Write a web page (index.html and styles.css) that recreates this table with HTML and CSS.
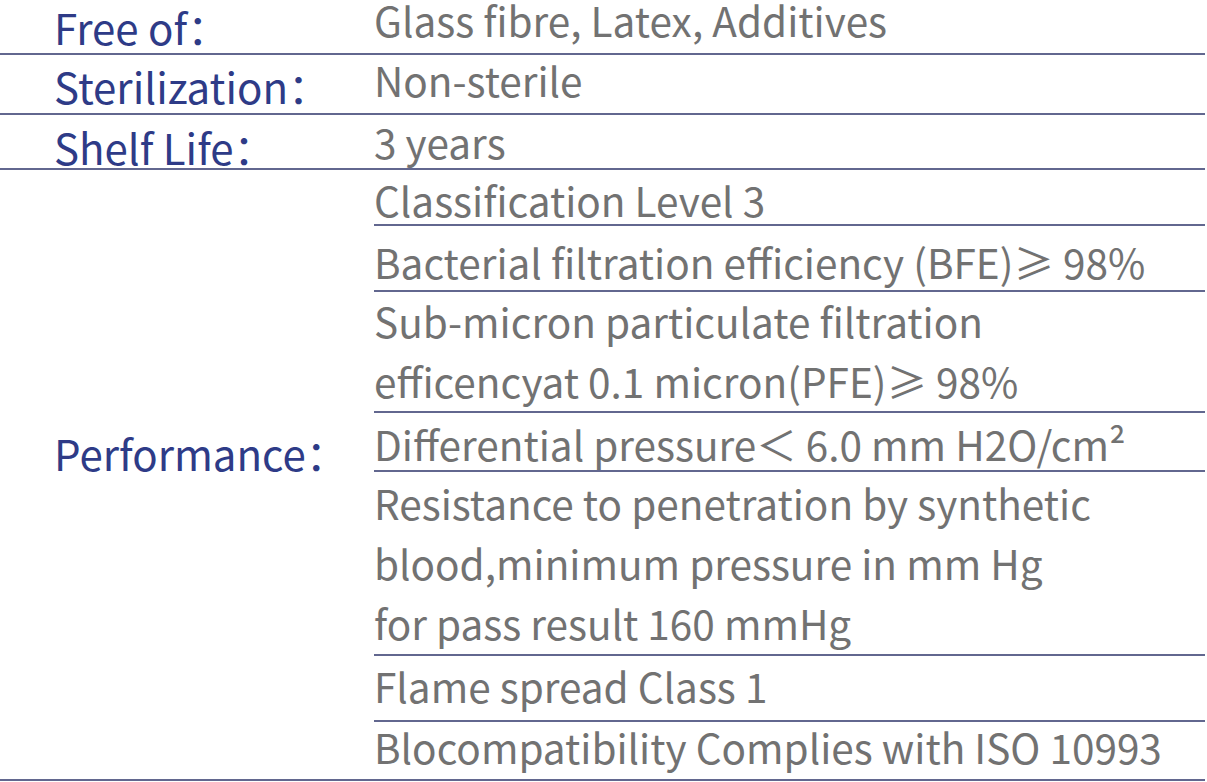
FILE: index.html
```html
<!DOCTYPE html>
<html lang="en">
<head>
<meta charset="utf-8">
<title>Specifications</title>
<link rel="stylesheet" href="styles.css">
</head>
<body>
<div class="spec">
  <div class="row r1">
    <div class="label">Free of：</div>
    <div class="val"><span>Glass fibre, Latex, Additives</span></div>
  </div>
  <div class="row r2">
    <div class="label">Sterilization：</div>
    <div class="val"><span>Non-sterile</span></div>
  </div>
  <div class="row r3">
    <div class="label">Shelf Life：</div>
    <div class="val"><span>3 years</span></div>
  </div>
  <div class="row perf">
    <div class="label">Performance：</div>
    <div class="items">
      <div class="item i4"><span>Classification Level 3</span></div>
      <div class="item i5"><span>Bacterial filtration efficiency (BFE)≥ 98%</span></div>
      <div class="item i6 multi"><span>Sub-micron particulate filtration<br>efficencyat 0.1 micron(PFE)≥ 98%</span></div>
      <div class="item i7"><span>Differential pressure＜ 6.0 mm H2O/cm²</span></div>
      <div class="item i8 multi"><span>Resistance to penetration by synthetic<br>blood,minimum pressure in mm Hg<br>for pass result 160 mmHg</span></div>
      <div class="item i9"><span>Flame spread Class 1</span></div>
      <div class="item i10"><span>Blocompatibility Complies with ISO 10993</span></div>
    </div>
  </div>
</div>
</body>
</html>
```
FILE: styles.css
```css
* { box-sizing: border-box; }
html, body { margin: 0; padding: 0; background: #ffffff; }
body { font-family: "Noto Sans CJK SC", "Noto Sans", sans-serif; }

.spec { width: 1205px; }

.row {
  display: grid;
  grid-template-columns: 374px 1fr;
  border-bottom: 2px solid #62678f;
}

.label {
  padding-left: 54px;
  font-size: 42px;
  line-height: 42px;
  font-weight: 400;
  color: #2e3b87;
  white-space: nowrap;
  align-self: end;
}

.val, .item {
  display: flex;
  align-items: flex-end;
  font-size: 40.5px;
  line-height: 40px;
  font-weight: 400;
  color: #727272;
  white-space: nowrap;
}

.r1 { height: 55px; }
.r1 .label { padding-bottom: 6px; }
.r1 .val { padding-bottom: 14px; }

.r2 { height: 60px; }
.r2 .label { padding-bottom: 6px; }
.r2 .val { padding-bottom: 13px; }

.r3 { height: 55px; }
.r3 .label { padding-bottom: 0; }
.r3 .val { padding-bottom: 6px; }

.perf .label { align-self: center; padding-bottom: 44px; }

.items { display: flex; flex-direction: column; }
.item { border-bottom: 2px solid #62678f; }
.item:last-child { border-bottom: none; }
.multi { line-height: 60px; }

.i4 { height: 56px; padding-bottom: 4px; }
.i5 { height: 66px; padding-bottom: 8px; }
.i6 { height: 121px; padding-bottom: 0; }
.i7 { height: 59px; padding-bottom: 6px; }
.i8 { height: 184px; padding-bottom: 1px; }
.i9 { height: 66px; padding-bottom: 14px; }
.i10 { height: 57px; padding-bottom: 12px; }
```
